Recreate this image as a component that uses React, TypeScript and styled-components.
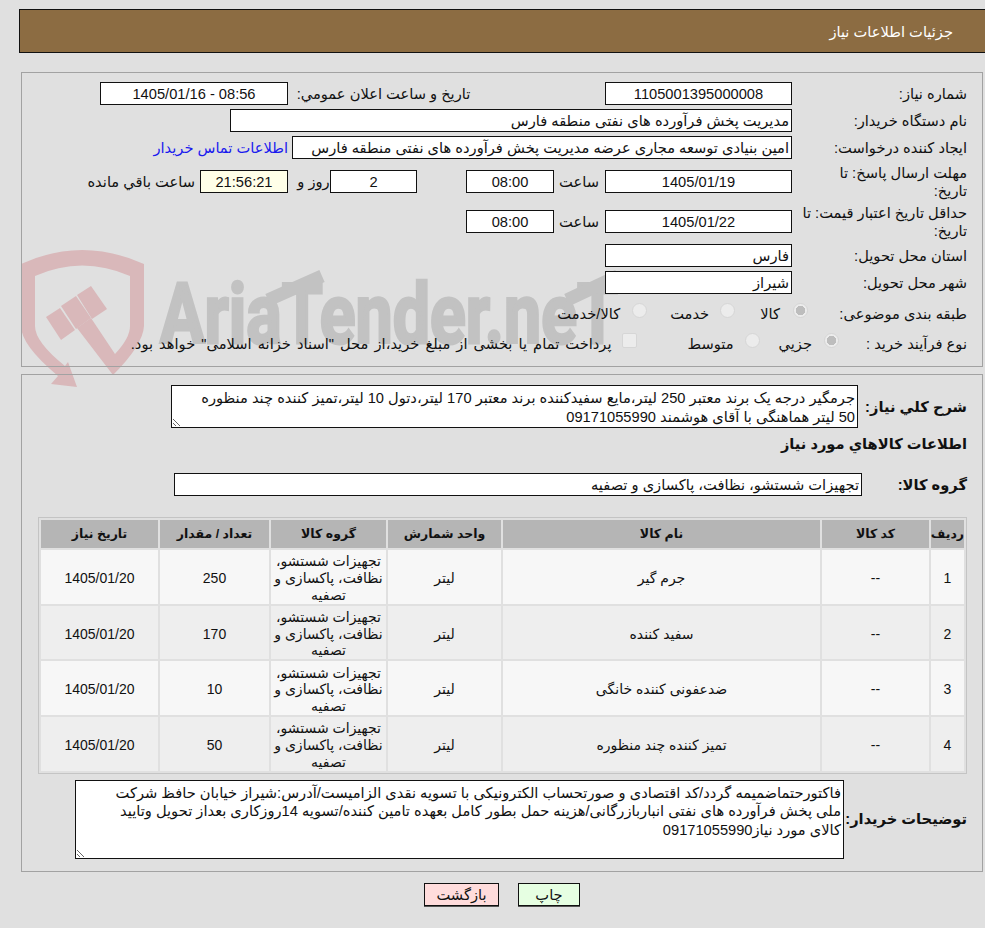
import React from 'react';
import styled, {createGlobalStyle} from 'styled-components';

const GlobalStyle = createGlobalStyle`
    html, body {
        margin: 0;
        padding: 0;
        background: #e0e0e0;
    }
    body {
        font-family: "Liberation Sans", "DejaVu Sans", sans-serif;
        font-size: 14.67px;
        line-height: 18px;
        color: #111;
    }
`;

const Page = styled.div`
    position: relative;
    height: 928px;
    padding-top: 9px;
    box-sizing: border-box;
    direction: rtl;
    overflow: hidden;
`;

/* Faded logo behind the form */
const Watermark = styled.svg`
    position: absolute;
    left: 0;
    top: 240px;
`;

const Header = styled.div`
    position: relative;
    height: 44px;
    margin-left: 19px;
    padding-right: 32px;
    box-sizing: border-box;
    background: #8c6c42;
    border: 1px solid #111;
    border-right: none;
    color: #fff;
    display: flex;
    align-items: center;
    padding-top: 1px;
`;

const Panel = styled.div<{ $top: number; $height: number }>`
    position: relative;
    margin: ${({$top}) => $top}px 2px 0 21px;
    height: ${({$height}) => $height}px;
    box-sizing: border-box;
    border: 1px solid #a2a2a2;
    padding-right: 15px;
`;

const Row = styled.div<{ $top: number; $height?: number }>`
    display: flex;
    align-items: center;
    margin-top: ${({$top}) => $top}px;
    height: ${({$height}) => $height || 23}px;
`;

const Label = styled.div<{ $w: number; $bold?: boolean }>`
    flex: none;
    width: ${({$w}) => $w}px;
    box-sizing: border-box;
    font-weight: ${({$bold}) => ($bold ? 'bold' : 'normal')};
    font-size: 14.67px;
`;

const Field = styled.div<{ $w: number; $gap?: number; $tint?: boolean; $start?: boolean }>`
    flex: none;
    position: relative;
    width: ${({$w}) => $w}px;
    height: 23px;
    margin-right: ${({$gap}) => $gap || 0}px;
    box-sizing: border-box;
    border: 1px solid #111;
    background: ${({$tint}) => ($tint ? '#ffffe8' : '#fff')};
    text-align: ${({$start}) => ($start ? 'right' : 'center')};
    padding: 0 2px;
    line-height: 22px;
    white-space: nowrap;
    overflow: hidden;
`;

const Caption = styled.span<{ $w?: number; $gap?: number; $spread?: boolean }>`
    flex: none;
    width: ${({$w}) => ($w ? `${$w}px` : 'auto')};
    margin-right: ${({$gap}) => $gap || 0}px;
    text-align: center;
    white-space: nowrap;
    word-spacing: ${({$spread}) => ($spread ? '2px' : 'normal')};
`;

const ContactLink = styled.a`
    margin-right: 4px;
    color: #1a1aee;
    text-decoration: none;
    white-space: nowrap;
`;

const Radio = styled.span<{ $on?: boolean; $gap?: number }>`
    flex: none;
    width: 15px;
    height: 15px;
    margin-right: ${({$gap}) => $gap || 0}px;
    box-sizing: border-box;
    border-radius: 50%;
    border: 1px solid #d6d6d6;
    background: ${({$on}) => ($on ? 'radial-gradient(circle, #bdbdbd 0 4.5px, #ececec 5px)' : '#ececec')};
    position: relative;
    top: -3px;
`;

const Check = styled.span<{ $gap?: number }>`
    flex: none;
    width: 15px;
    height: 15px;
    margin-right: ${({$gap}) => $gap || 0}px;
    box-sizing: border-box;
    border-radius: 2px;
    border: 1px solid #d6d6d6;
    background: #ececec;
    position: relative;
    top: -3px;
`;

const Note = styled.textarea<{ $w: number; $h: number }>`
    flex: none;
    display: block;
    width: ${({$w}) => $w}px;
    height: ${({$h}) => $h}px;
    margin: 0;
    padding: 3px 2px 0 18px;
    box-sizing: border-box;
    border: 1px solid #111;
    border-radius: 0;
    outline: none;
    background: #fff;
    color: #111;
    font: inherit;
    line-height: 18.5px;
    direction: rtl;
    resize: both;
    overflow: hidden;
`;

const SectionTitle = styled.div`
    margin-top: 7px;
    height: 20px;
    font-weight: bold;
    font-size: 14.67px;
`;

const GoodsTable = styled.table`
    width: 928px;
    margin-top: 21px;
    table-layout: fixed;
    border: 1px solid #c4c4c4;
    border-spacing: 2px;
    background: #e0e0e0;
    font-size: 14px;
    line-height: 16.67px;
`;

const HeadCell = styled.th<{ $w: number }>`
    width: ${({$w}) => $w}px;
    height: 28px;
    padding: 0;
    background: #b5b5b5;
    font-weight: bold;
    font-size: 12.5px;
    text-align: center;
`;

const BodyRow = styled.tr<{ $even: boolean }>`
    background: ${({$even}) => ($even ? '#eeeeee' : '#f7f7f7')};
`;

const Cell = styled.td`
    padding: 3px 3px 0;
    height: 50.67px;
    text-align: center;
`;

const Buttons = styled.div`
    display: flex;
    justify-content: center;
    gap: 19px;
    margin-top: 11px;
    padding-left: 19px;
`;

const ActionButton = styled.button<{ $bg: string; $w: number }>`
    width: ${({$w}) => $w}px;
    height: 23px;
    padding: 0;
    background: ${({$bg}) => $bg};
    border: 1px solid #111;
    box-shadow: 0 1px 0 #555;
    color: #111;
    font: inherit;
`;

const items = [
    {no: 1, name: 'جرم گیر', qty: 250},
    {no: 2, name: 'سفید کننده', qty: 170},
    {no: 3, name: 'ضدعفونی کننده خانگی', qty: 10},
    {no: 4, name: 'تمیز کننده چند منظوره', qty: 50},
];

const App: React.FC = () => {
    return (
        <Page>
            <GlobalStyle/>
            <Watermark width="640" height="160" viewBox="0 240 640 160">
                <g fill="#d9b8ba">
                    <path d="M21 264 Q82 236 144 264 V326 Q143 345 113 375 L77 328 L91 318 L115 354 Q130 338 130 326 V276 Q82 255 35 276 V326 Q35 342 65 366 L68 362 L77 387 L51 384 L58 376 Q21 345 21 326 Z"/>
                    <path d="M46 317 L60 308 L75 330 L61 340 Z"/>
                    <path d="M61 306 L76 296 L91 318 L76 329 Z"/>
                    <path d="M77 295 L91 286 L107 309 L92 319 Z"/>
                </g>
                <text x="160" y="343" fill="#c2c2c2" stroke="#c2c2c2" strokeWidth="3" fontFamily="Roboto" fontWeight="700"
                      fontSize="84" textLength="458" lengthAdjust="spacingAndGlyphs" direction="ltr">AriaTender.neT</text>
                {/* slanted flourish over both capital Ts */}
                <path d="M268 300 L322 276 M567 300 L618 276" stroke="#c2c2c2" strokeWidth="13" fill="none"/>
            </Watermark>

            <Header>جزئیات اطلاعات نیاز</Header>

            <Panel $top={19} $height={295}>
                <Row $top={9}>
                    <Label $w={175}>شماره نیاز:</Label>
                    <Field $w={187}>1105001395000008</Field>
                    <Caption $w={181} $gap={131}>تاریخ و ساعت اعلان عمومي:</Caption>
                    <Field $w={188} $gap={5}>08:56 - 1405/01/16</Field>
                </Row>
                <Row $top={4}>
                    <Label $w={175}>نام دستگاه خریدار:</Label>
                    <Field $w={562} $start>مدیریت پخش فرآورده های نفتی منطقه فارس</Field>
                </Row>
                <Row $top={4}>
                    <Label $w={175}>ایجاد کننده درخواست:</Label>
                    <Field $w={500} $start>امین بنیادی توسعه مجاری عرضه مدیریت پخش فرآورده های نفتی منطقه فارس</Field>
                    <ContactLink href="#">اطلاعات تماس خریدار</ContactLink>
                </Row>
                <Row $top={11} $height={23}>
                    <Label $w={175}>مهلت ارسال پاسخ: تا<br/>تاریخ:</Label>
                    <Field $w={187}>1405/01/19</Field>
                    <Caption $w={42} $gap={5}>ساعت</Caption>
                    <Field $w={88} $gap={4}>08:00</Field>
                    <Field $w={87} $gap={49}>2</Field>
                    <Caption $w={33}>روز و</Caption>
                    <Field $w={88} $gap={9} $tint>21:56:21</Field>
                    <Caption $gap={5}>ساعت باقي مانده</Caption>
                </Row>
                <Row $top={17}>
                    <Label $w={175}>حداقل تاریخ اعتبار قیمت: تا تاریخ:</Label>
                    <Field $w={187}>1405/01/22</Field>
                    <Caption $w={42} $gap={5}>ساعت</Caption>
                    <Field $w={88} $gap={4}>08:00</Field>
                </Row>
                <Row $top={11}>
                    <Label $w={175}>استان محل تحویل:</Label>
                    <Field $w={187} $start>فارس</Field>
                </Row>
                <Row $top={4}>
                    <Label $w={175}>شهر محل تحویل:</Label>
                    <Field $w={187} $start>شیراز</Field>
                </Row>
                <Row $top={8}>
                    <Label $w={159}>طبقه بندی موضوعی:</Label>
                    <Radio $on/>
                    <Caption $gap={13}>کالا</Caption>
                    <Radio $gap={25}/>
                    <Caption $gap={11}>خدمت</Caption>
                    <Radio $gap={23}/>
                    <Caption $gap={12}>کالا/خدمت</Caption>
                </Row>
                <Row $top={7}>
                    <Label $w={128}>نوع فرآیند خرید :</Label>
                    <Radio $on/>
                    <Caption $gap={12}>جزيي</Caption>
                    <Radio $gap={19}/>
                    <Caption $gap={11}>متوسط</Caption>
                    <Check $gap={51}/>
                    <Caption $gap={10} $spread>پرداخت تمام یا بخشی از مبلغ خرید،از محل "اسناد خزانه اسلامی" خواهد بود.</Caption>
                </Row>
            </Panel>

            <Panel $top={7} $height={498}>
                <Row $top={10} $height={43}>
                    <Label $w={109} $bold>شرح کلي نیاز:</Label>
                    <Note $w={687} $h={43} readOnly
                          defaultValue="جرمگیر درجه یک برند معتبر 250 لیتر،مایع سفیدکننده برند معتبر 170 لیتر،دتول 10 لیتر،تمیز کننده چند منظوره 50 لیتر هماهنگی با آقای هوشمند 09171055990"/>
                </Row>
                <SectionTitle>اطلاعات کالاهاي مورد نیاز</SectionTitle>
                <Row $top={18}>
                    <Label $w={105} $bold>گروه کالا:</Label>
                    <Field $w={688} $start>تجهیزات شستشو، نظافت، پاکسازی و تصفیه</Field>
                </Row>
                <GoodsTable>
                    <thead>
                        <tr>
                            <HeadCell $w={33}>ردیف</HeadCell>
                            <HeadCell $w={107}>کد کالا</HeadCell>
                            <HeadCell $w={317}>نام کالا</HeadCell>
                            <HeadCell $w={113}>واحد شمارش</HeadCell>
                            <HeadCell $w={115}>گروه کالا</HeadCell>
                            <HeadCell $w={109}>تعداد / مقدار</HeadCell>
                            <HeadCell $w={117}>تاریخ نیاز</HeadCell>
                        </tr>
                    </thead>
                    <tbody>
                        {items.map((item) => (
                            <BodyRow key={item.no} $even={item.no % 2 === 0}>
                                <Cell>{item.no}</Cell>
                                <Cell>--</Cell>
                                <Cell>{item.name}</Cell>
                                <Cell>لیتر</Cell>
                                <Cell>تجهیزات شستشو، نظافت، پاکسازی و تصفیه</Cell>
                                <Cell>{item.qty}</Cell>
                                <Cell>1405/01/20</Cell>
                            </BodyRow>
                        ))}
                    </tbody>
                </GoodsTable>
                <Row $top={6} $height={79}>
                    <Label $w={123} $bold>توضیحات خریدار:</Label>
                    <Note $w={769} $h={79} readOnly
                          defaultValue="فاکتورحتماضمیمه گردد/کد اقتصادی و صورتحساب الکترونیکی با تسویه نقدی الزامیست/آدرس:شیراز خیابان حافظ شرکت ملی پخش فرآورده های نفتی انباربازرگانی/هزینه حمل بطور کامل بعهده تامین کننده/تسویه 14روزکاری بعداز تحویل وتایید کالای مورد نیاز09171055990"/>
                </Row>
            </Panel>

            <Buttons>
                <ActionButton $bg="#e6ffe2" $w={62}>چاپ</ActionButton>
                <ActionButton $bg="#ffdcdc" $w={75}>بازگشت</ActionButton>
            </Buttons>
        </Page>
    );
};

export default App;
